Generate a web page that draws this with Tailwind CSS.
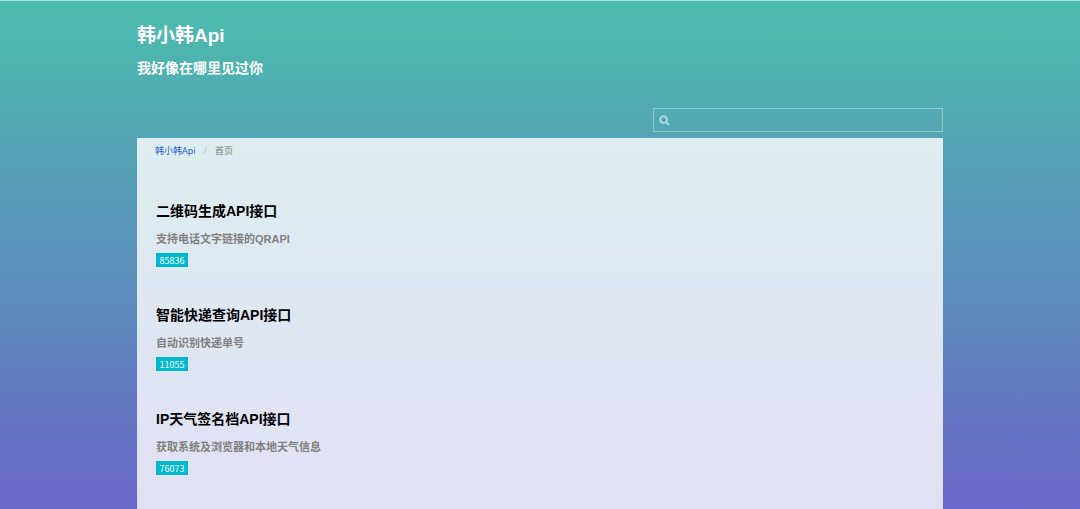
<!DOCTYPE html>
<html lang="zh-CN">
<head>
    <meta charset="UTF-8">
    <meta name="viewport" content="width=device-width, initial-scale=1.0">
    <title>韩小韩Api</title>
    <script src="https://cdn.jsdelivr.net/npm/@tailwindcss/browser@4"></script>
</head>
<body class="min-h-screen flex flex-col border-t border-[#b5e2df] bg-linear-to-b/srgb from-[#4bbdad] to-[#6a67c8] font-['Liberation_Sans','Noto_Sans_CJK_SC',sans-serif]">
    <div class="w-full max-w-[806px] mx-auto flex-1 flex flex-col">

        <!-- 站点标题 -->
        <header class="pt-[21px] text-white font-bold">
            <h1 class="text-[19px] leading-7">韩小韩Api</h1>
            <h2 class="mt-2 text-sm leading-5">我好像在哪里见过你</h2>
        </header>

        <!-- 搜索 -->
        <form class="mt-[30px] flex justify-end">
            <label class="w-[290px] h-6 flex items-center border border-white/35 pl-[5px] gap-1.5">
                <svg class="w-[11px] h-[11px] shrink-0 text-white/50" viewBox="0 0 11 11" fill="none" stroke="currentColor">
                    <path d="M1.2 4.6a3.4 3.4 0 1 0 6.8 0a3.4 3.4 0 1 0 -6.8 0M7.2 7.2 9.6 9.6" stroke-width="2.1" stroke-linecap="round"/>
                </svg>
                <input type="search" aria-label="搜索" class="flex-1 min-w-0 text-[11px] text-white outline-none">
            </label>
        </form>

        <main class="mt-1.5 flex-1 bg-white/80 px-[18px]">
            <!-- 面包屑 -->
            <nav class="pt-[5px] flex gap-2 text-[9px] leading-4 font-['Noto_Sans','Noto_Sans_CJK_SC',sans-serif]">
                <a href="#" class="text-[#2b5bd7]">韩小韩Api</a>
                <span class="text-[#bbc5c8]">/</span>
                <span class="text-[#777]">首页</span>
            </nav>

            <!-- 接口列表 -->
            <ul class="pt-[42px] pl-px flex flex-col gap-[38px]">
                <li>
                    <h3 class="text-sm leading-5 font-bold text-black">二维码生成API接口</h3>
                    <p class="mt-2 text-[11px] leading-5 font-bold text-[#808080]">支持电话文字链接的QRAPI</p>
                    <span class="mt-1 block w-8 h-[14px] bg-[#00b8d0] text-center text-[9px] leading-4 text-white font-['Noto_Sans_CJK_SC',sans-serif]">85836</span>
                </li>
                <li>
                    <h3 class="text-sm leading-5 font-bold text-black">智能快递查询API接口</h3>
                    <p class="mt-2 text-[11px] leading-5 font-bold text-[#808080]">自动识别快递单号</p>
                    <span class="mt-1 block w-8 h-[14px] bg-[#00b8d0] text-center text-[9px] leading-4 text-white font-['Noto_Sans_CJK_SC',sans-serif]">11055</span>
                </li>
                <li>
                    <h3 class="text-sm leading-5 font-bold text-black">IP天气签名档API接口</h3>
                    <p class="mt-2 text-[11px] leading-5 font-bold text-[#808080]">获取系统及浏览器和本地天气信息</p>
                    <span class="mt-1 block w-8 h-[14px] bg-[#00b8d0] text-center text-[9px] leading-4 text-white font-['Noto_Sans_CJK_SC',sans-serif]">76073</span>
                </li>
            </ul>
        </main>
    </div>
</body>
</html>
